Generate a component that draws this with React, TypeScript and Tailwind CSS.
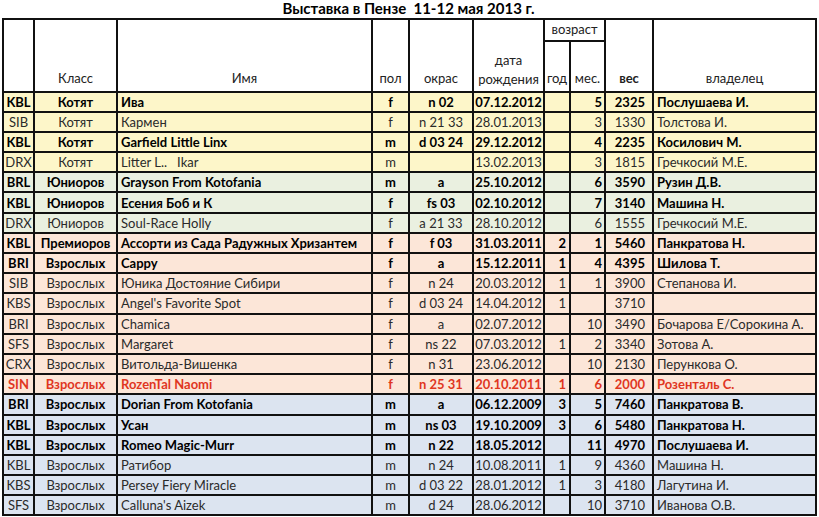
import React from 'react';

type Row = {
  breed: string;
  cls: string;
  name: string;
  sex: string;
  color: string;
  born: string;
  years: string;
  months: string;
  weight: string;
  owner: string;
  bold?: boolean;
  red?: boolean;
  group: 'kitten' | 'junior' | 'adultF' | 'adultM';
};

const rows: Row[] = [
  { breed: 'KBL', cls: 'Котят', name: 'Ива', sex: 'f', color: 'n 02', born: '07.12.2012', years: '', months: '5', weight: '2325', owner: 'Послушаева И.', bold: true, group: 'kitten' },
  { breed: 'SIB', cls: 'Котят', name: 'Кармен', sex: 'f', color: 'n 21 33', born: '28.01.2013', years: '', months: '3', weight: '1330', owner: 'Толстова И.', group: 'kitten' },
  { breed: 'KBL', cls: 'Котят', name: 'Garfield Little Linx', sex: 'm', color: 'd 03 24', born: '29.12.2012', years: '', months: '4', weight: '2235', owner: 'Косилович М.', bold: true, group: 'kitten' },
  { breed: 'DRX', cls: 'Котят', name: 'Litter L..   Ikar', sex: 'm', color: '', born: '13.02.2013', years: '', months: '3', weight: '1815', owner: 'Гречкосий М.Е.', group: 'kitten' },
  { breed: 'BRL', cls: 'Юниоров', name: 'Grayson From Kotofania', sex: 'm', color: 'a', born: '25.10.2012', years: '', months: '6', weight: '3590', owner: 'Рузин Д.В.', bold: true, group: 'junior' },
  { breed: 'KBL', cls: 'Юниоров', name: 'Есения Боб и К', sex: 'f', color: 'fs 03', born: '02.10.2012', years: '', months: '7', weight: '3140', owner: 'Машина Н.', bold: true, group: 'junior' },
  { breed: 'DRX', cls: 'Юниоров', name: 'Soul-Race Holly', sex: 'f', color: 'a 21 33', born: '28.10.2012', years: '', months: '6', weight: '1555', owner: 'Гречкосий М.Е.', group: 'junior' },
  { breed: 'KBL', cls: 'Премиоров', name: 'Ассорти из Сада Радужных Хризантем', sex: 'f', color: 'f 03', born: '31.03.2011', years: '2', months: '1', weight: '5460', owner: 'Панкратова Н.', bold: true, group: 'adultF' },
  { breed: 'BRI', cls: 'Взрослых', name: 'Cappy', sex: 'f', color: 'a', born: '15.12.2011', years: '1', months: '4', weight: '4395', owner: 'Шилова Т.', bold: true, group: 'adultF' },
  { breed: 'SIB', cls: 'Взрослых', name: 'Юника Достояние Сибири', sex: 'f', color: 'n 24', born: '20.03.2012', years: '1', months: '1', weight: '3900', owner: 'Степанова И.', group: 'adultF' },
  { breed: 'KBS', cls: 'Взрослых', name: "Angel's Favorite Spot", sex: 'f', color: 'd 03 24', born: '14.04.2012', years: '1', months: '', weight: '3710', owner: '', group: 'adultF' },
  { breed: 'BRI', cls: 'Взрослых', name: 'Chamica', sex: 'f', color: 'a', born: '02.07.2012', years: '', months: '10', weight: '3490', owner: 'Бочарова Е/Сорокина А.', group: 'adultF' },
  { breed: 'SFS', cls: 'Взрослых', name: 'Margaret', sex: 'f', color: 'ns 22', born: '07.03.2012', years: '1', months: '2', weight: '3340', owner: 'Зотова А.', group: 'adultF' },
  { breed: 'CRX', cls: 'Взрослых', name: 'Витольда-Вишенка', sex: 'f', color: 'n 31', born: '23.06.2012', years: '', months: '10', weight: '2130', owner: 'Перункова О.', group: 'adultF' },
  { breed: 'SIN', cls: 'Взрослых', name: 'RozenTal Naomi', sex: 'f', color: 'n 25 31', born: '20.10.2011', years: '1', months: '6', weight: '2000', owner: 'Розенталь С.', bold: true, red: true, group: 'adultF' },
  { breed: 'BRI', cls: 'Взрослых', name: 'Dorian From Kotofania', sex: 'm', color: 'a', born: '06.12.2009', years: '3', months: '5', weight: '7460', owner: 'Панкратова В.', bold: true, group: 'adultM' },
  { breed: 'KBL', cls: 'Взрослых', name: 'Усан', sex: 'm', color: 'ns 03', born: '19.10.2009', years: '3', months: '6', weight: '5480', owner: 'Панкратова Н.', bold: true, group: 'adultM' },
  { breed: 'KBL', cls: 'Взрослых', name: 'Romeo Magic-Murr', sex: 'm', color: 'n 22', born: '18.05.2012', years: '', months: '11', weight: '4970', owner: 'Послушаева И.', bold: true, group: 'adultM' },
  { breed: 'KBL', cls: 'Взрослых', name: 'Ратибор', sex: 'm', color: 'n 24', born: '10.08.2011', years: '1', months: '9', weight: '4360', owner: 'Машина Н.', group: 'adultM' },
  { breed: 'KBS', cls: 'Взрослых', name: 'Persey Fiery Miracle', sex: 'm', color: 'd 03 22', born: '28.01.2012', years: '1', months: '3', weight: '4180', owner: 'Лагутина И.', group: 'adultM' },
  { breed: 'SFS', cls: 'Взрослых', name: "Calluna's Aizek", sex: 'm', color: 'd 24', born: '28.06.2012', years: '', months: '10', weight: '3710', owner: 'Иванова О.В.', group: 'adultM' },
];

const groupBg: Record<Row['group'], string> = {
  kitten: 'bg-[#fdf6c9]',
  junior: 'bg-[#eaf0e0]',
  adultF: 'bg-[#fce6d8]',
  adultM: 'bg-[#dce4f0]',
};

const cell = 'border-2 border-[#111] h-[20.2px] p-0 leading-[16px] whitespace-pre overflow-hidden';

export default function App() {
  return (
    <div className="bg-white w-[819px] h-[517px] overflow-hidden text-[13px] text-[#222]" style={{ fontFamily: 'Lato, "Liberation Sans", sans-serif' }}>
      <div className="w-[813px] ml-[2px] h-[18px] text-center font-bold text-[15px] leading-[17px] text-black whitespace-pre">
        Выставка в Пензе  11-12 мая 2013 г.
      </div>
      <table className="ml-[2px] w-[813px] table-fixed border-collapse">
        <colgroup>
          <col className="w-[31px]" />
          <col className="w-[83px]" />
          <col className="w-[255px]" />
          <col className="w-[37px]" />
          <col className="w-[64px]" />
          <col className="w-[71px]" />
          <col className="w-[26px]" />
          <col className="w-[35px]" />
          <col className="w-[48px]" />
          <col className="w-[163px]" />
        </colgroup>
        <thead>
          <tr className="h-[21px]">
            <th rowSpan={2} className="border-2 border-[#111] p-0"></th>
            <th rowSpan={2} className="border-2 border-[#111] p-0 align-bottom font-normal pb-[2px]">Класс</th>
            <th rowSpan={2} className="border-2 border-[#111] p-0 align-bottom font-normal pb-[2px]">Имя</th>
            <th rowSpan={2} className="border-2 border-[#111] p-0 align-bottom font-normal pb-[2px]">пол</th>
            <th rowSpan={2} className="border-2 border-[#111] p-0 align-bottom font-normal pb-[2px]">окрас</th>
            <th rowSpan={2} className="border-2 border-[#111] p-0 align-bottom font-normal pb-[2px] leading-[19px]">
              дата
              <br />
              рождения
            </th>
            <th colSpan={2} className="border-2 border-[#111] p-0 font-normal">возраст</th>
            <th rowSpan={2} className="border-2 border-[#111] p-0 align-bottom font-bold pb-[2px]">вес</th>
            <th rowSpan={2} className="border-2 border-[#111] p-0 align-bottom font-normal pb-[2px]">владелец</th>
          </tr>
          <tr className="h-[51px]">
            <th className="border-2 border-[#111] p-0 align-bottom font-normal pb-[2px]">год</th>
            <th className="border-2 border-[#111] p-0 align-bottom font-normal pb-[2px]">мес.</th>
          </tr>
        </thead>
        <tbody>
          {rows.map((r, i) => {
            const tone = r.red ? 'text-[#e0361f] font-bold' : r.bold ? 'text-black font-bold' : 'text-[#2a2a2a]';
            return (
              <tr key={i} className={`${groupBg[r.group]} ${tone}`}>
                <td className={`${cell} text-center`}>{r.breed}</td>
                <td className={`${cell} text-center`}>{r.cls}</td>
                <td className={`${cell} pl-[3px]`}>{r.name}</td>
                <td className={`${cell} text-center`}>{r.sex}</td>
                <td className={`${cell} text-center`}>{r.color}</td>
                <td className={`${cell} text-center`}>{r.born}</td>
                <td className={`${cell} text-right pr-[3px]`}>{r.years}</td>
                <td className={`${cell} text-right pr-[2px]`}>{r.months}</td>
                <td className={`${cell} text-right pr-[7px]`}>{r.weight}</td>
                <td className={`${cell} pl-[3px]`}>{r.owner}</td>
              </tr>
            );
          })}
        </tbody>
      </table>
    </div>
  );
}
